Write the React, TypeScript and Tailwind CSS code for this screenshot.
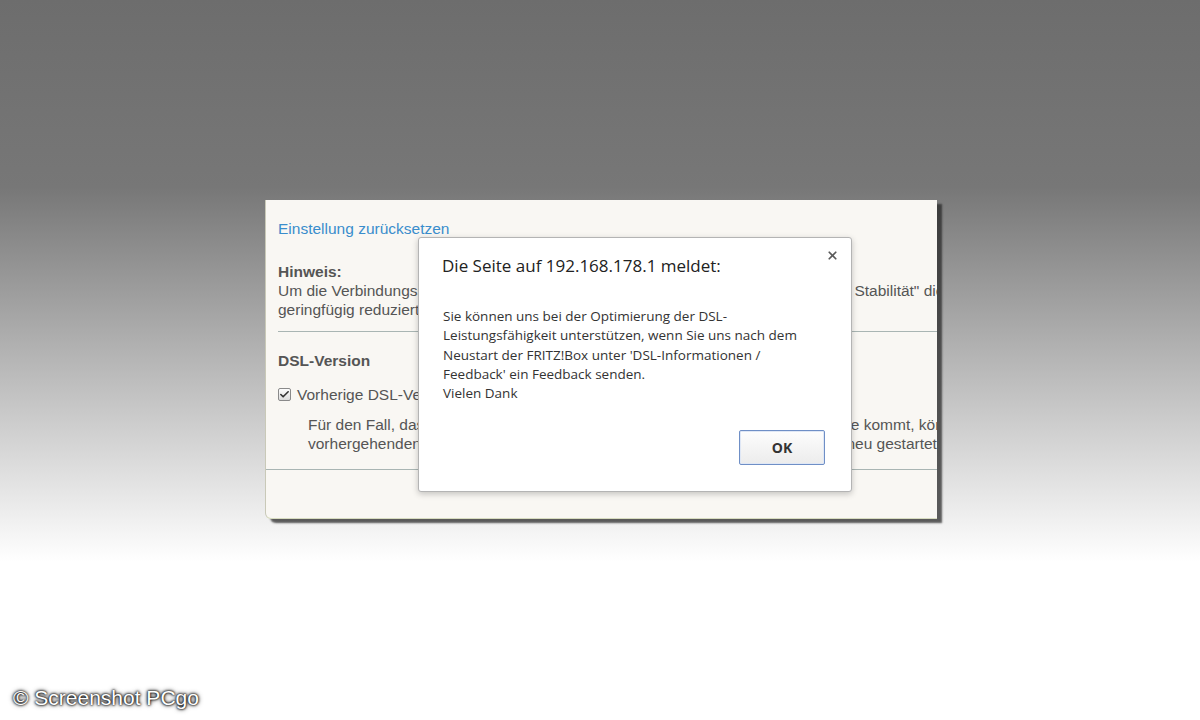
import { Check, X } from "lucide-react";

export default function App() {
  return (
    <div className="relative h-[720px] w-[1200px] overflow-hidden bg-[linear-gradient(to_bottom,#6d6d6d_0%,#777777_26%,#ffffff_78%,#ffffff_100%)] font-['Liberation_Sans',Arial,sans-serif]">
      <div className="pl-[265px] pt-[200px]">
        <div className="relative h-[319px] w-[672px] overflow-hidden rounded-bl-[6px] border-l border-b border-l-[#c9c9b8] border-b-[#d8dcc0] bg-[#f9f7f3] shadow-[5px_4px_2px_rgba(40,40,40,0.75)]">
          <div className="text-[15.5px] leading-[19px] text-[#555] whitespace-nowrap">
            <div className="pl-[12px]">
              <div className="pt-[19px] text-[#3a8dcc]">Einstellung zurücksetzen</div>

              <div className="mt-[24px] font-bold">Hinweis:</div>
              <div>
                Um die Verbindungsstabilität zu erhöhen, können Sie bei der Einstellung „Maximale Stabilität" die
              </div>
              <div>geringfügig reduziert.</div>

              <div className="mt-[12px] h-px w-full bg-[#a9b5b3]" />

              <div className="mt-[19px] font-bold">DSL-Version</div>

              <div className="mt-[15px] flex items-center gap-[6px]">
                <span className="flex h-[13px] w-[13px] items-center justify-center rounded-[2px] border border-[#8a8a8a] bg-[linear-gradient(to_bottom,#fdfdfd,#dcdcdc)]">
                  <Check size={11} strokeWidth={3.5} className="text-[#333]" />
                </span>
                <span>Vorherige DSL-Version verwenden</span>
              </div>

              <div className="mt-[11px] pl-[30px]">
                <div>
                  Für den Fall, dass es mit der neuen DSL-Version zu Fehlern mit der Gegenstelle kommt, können Sie zur
                </div>
                <div>
                  vorhergehenden DSL-Version zurückkehren. Die FRITZ!Box wird dann einmal neu gestartet.
                </div>
              </div>
            </div>

            <div className="mt-[16px] h-px w-full bg-[#a9b5b3]" />
          </div>
        </div>
      </div>

      {/* alert dialog */}
      <div className="absolute left-[418px] top-[237px] flex h-[255px] w-[434px] flex-col rounded-[3px] border border-[#b4b4b4] bg-white shadow-[0_2px_6px_rgba(0,0,0,0.22)] font-['Open_Sans','Noto_Sans',sans-serif]">
        <div className="flex items-start justify-between pl-[23px] pr-[12px] pt-[15px]">
          <div className="text-[17px] leading-[26px] text-[#222]">Die Seite auf 192.168.178.1 meldet:</div>
          <X size={13} strokeWidth={3.2} className="mt-[-4px] text-[#5a5a5a]" />
        </div>
        <div className="mt-[28px] pl-[24px] text-[13.5px] leading-[19.3px] text-[#333]">
          <div>Sie können uns bei der Optimierung der DSL-</div>
          <div>Leistungsfähigkeit unterstützen, wenn Sie uns nach dem</div>
          <div>Neustart der FRITZ!Box unter 'DSL-Informationen /</div>
          <div>Feedback' ein Feedback senden.</div>
          <div>Vielen Dank</div>
        </div>
        <div className="mt-auto flex justify-end pb-[26px] pr-[26px]">
          <button className="h-[35px] w-[86px] rounded-[2px] border border-[#6f8fc6] bg-[linear-gradient(to_bottom,#fdfdfd,#ececec)] text-[14px] font-bold text-[#333] shadow-[inset_0_0_0_1px_#dfe7f5]">
            OK
          </button>
        </div>
      </div>

      {/* watermark */}
      <div className="absolute left-[13px] top-[685px] text-[21px] leading-[26px] text-white [text-shadow:0_0_2px_#000,0_0_3px_#000,0_0_5px_rgba(0,0,0,0.8)] font-['Liberation_Sans',Arial,sans-serif]">
        © Screenshot PCgo
      </div>
    </div>
  );
}
